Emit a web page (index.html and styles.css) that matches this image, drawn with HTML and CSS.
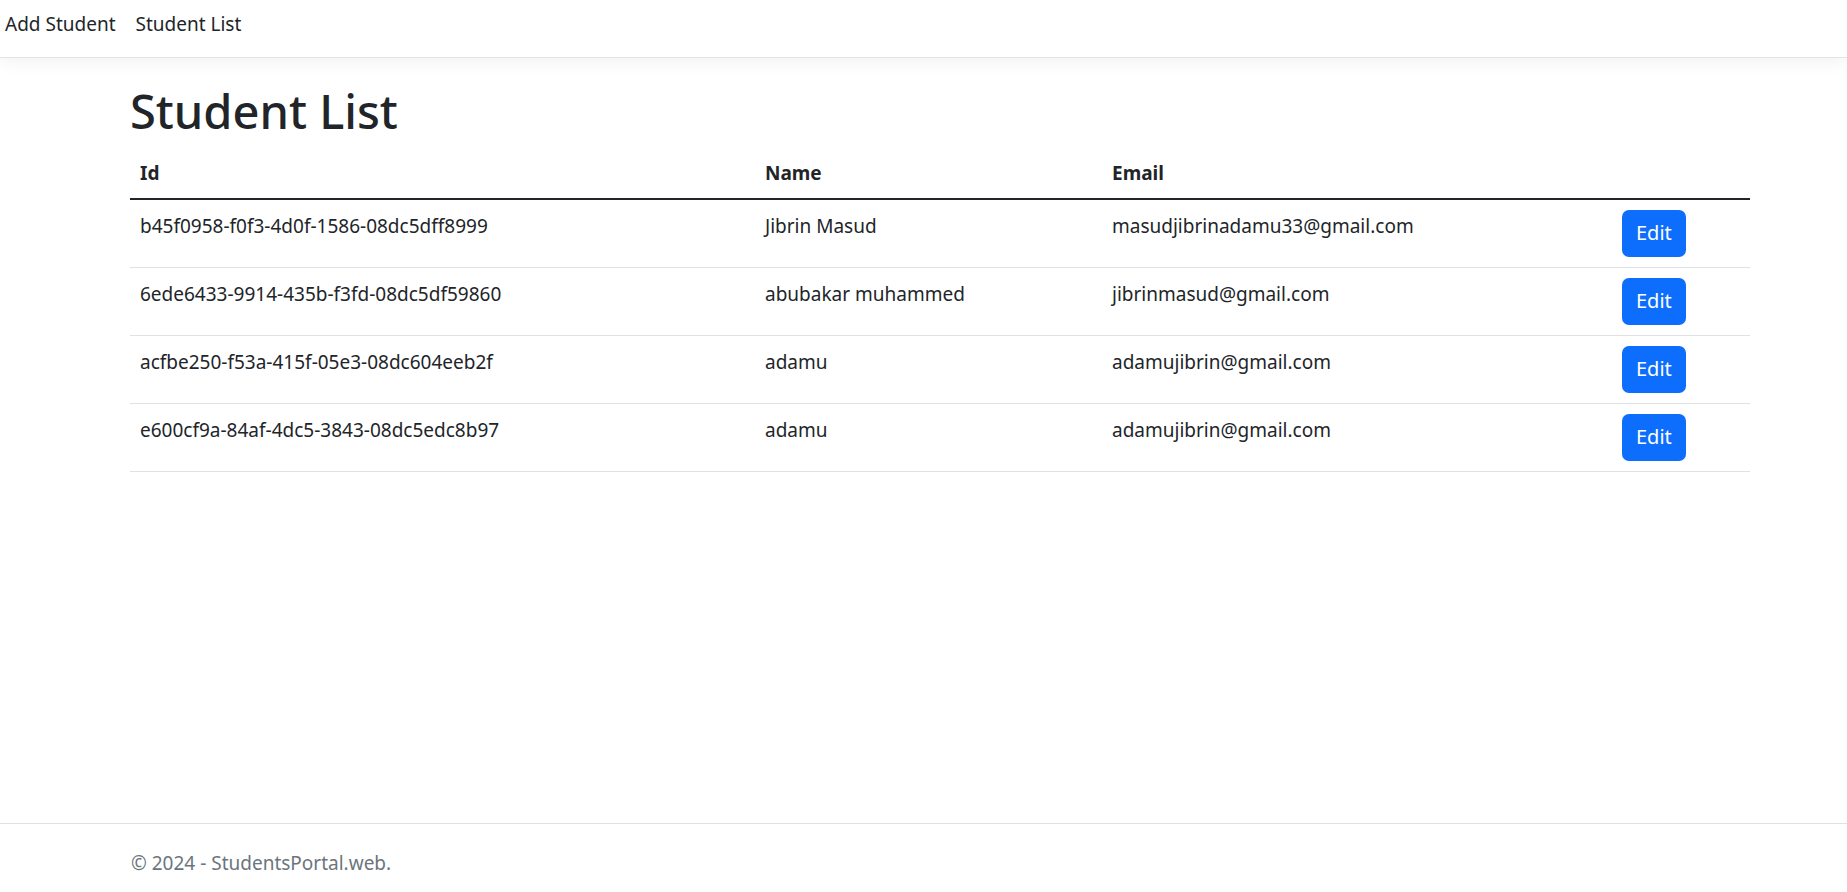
FILE: index.html
```html
<!DOCTYPE html>
<html lang="en">
<head>
<meta charset="utf-8">
<title>Student List</title>
<link rel="stylesheet" href="styles.css">
</head>
<body>
<header class="navbar">
  <nav class="nav-links">
    <a class="nav-link" href="#">Add Student</a>
    <a class="nav-link" href="#">Student List</a>
  </nav>
</header>
<main class="container">
  <h1 class="title">Student List</h1>
  <table class="table">
    <thead>
      <tr>
        <th class="col-id">Id</th>
        <th class="col-name">Name</th>
        <th class="col-email">Email</th>
        <th class="col-action"></th>
      </tr>
    </thead>
    <tbody>
      <tr>
        <td>b45f0958-f0f3-4d0f-1586-08dc5dff8999</td>
        <td>Jibrin Masud</td>
        <td>masudjibrinadamu33@gmail.com</td>
        <td><a class="btn" href="#">Edit</a></td>
      </tr>
      <tr>
        <td>6ede6433-9914-435b-f3fd-08dc5df59860</td>
        <td>abubakar muhammed</td>
        <td>jibrinmasud@gmail.com</td>
        <td><a class="btn" href="#">Edit</a></td>
      </tr>
      <tr>
        <td>acfbe250-f53a-415f-05e3-08dc604eeb2f</td>
        <td>adamu</td>
        <td>adamujibrin@gmail.com</td>
        <td><a class="btn" href="#">Edit</a></td>
      </tr>
      <tr>
        <td>e600cf9a-84af-4dc5-3843-08dc5edc8b97</td>
        <td>adamu</td>
        <td>adamujibrin@gmail.com</td>
        <td><a class="btn" href="#">Edit</a></td>
      </tr>
    </tbody>
  </table>
</main>
<footer class="footer">
  <div class="container footer-inner">&copy; 2024 - StudentsPortal.web.</div>
</footer>
</body>
</html>
```

FILE: styles.css
```css
* { box-sizing: border-box; }
html, body { margin: 0; padding: 0; }
body {
  font-family: "Noto Sans", "Open Sans", sans-serif;
  font-size: 19px;
  line-height: 30px;
  color: #212529;
  background: #fff;
  height: 892px;
  display: flex;
  flex-direction: column;
  overflow: hidden;
}
.navbar {
  height: 58px;
  border-bottom: 1px solid #e3e3e8;
  box-shadow: 0 5px 15px rgba(0, 0, 0, 0.05);
  padding: 9px 0 0 5px;
  background: #fff;
  position: relative;
  z-index: 1;
}
.nav-links { display: flex; gap: 20px; }
.nav-link { color: #212529; text-decoration: none; }
.container {
  margin-left: 130px;
  width: 1620px;
}
main.container { flex: 1; padding-top: 22px; }
.title {
  font-size: 47px;
  font-weight: 500;
  line-height: 58px;
  margin: 0 0 10px 0;
  position: relative;
  top: 2px;
}
.table {
  width: 1620px;
  border-collapse: collapse;
  table-layout: fixed;
}
.table th, .table td {
  text-align: left;
  vertical-align: top;
  padding: 10px;
  line-height: 30px;
}
.table td { padding-top: 11px; padding-bottom: 9px; }
.table th { font-weight: 700; border-bottom: 2px solid #212529; }
.table td { border-bottom: 1px solid #dee2e6; }
.table td.cell-action { padding-top: 10px; padding-bottom: 10px; }
.col-id { width: 625px; }
.col-name { width: 347px; }
.col-email { width: 510px; }
.col-action { width: 138px; }
.btn {
  display: inline-block;
  background: #0d6efd;
  color: #fff;
  text-decoration: none;
  padding: 8px 14px 9px;
  border-radius: 7px;
  line-height: 30px;
  font-size: 20px;
  position: relative;
  top: -1px;
}
.footer {
  height: 69px;
  border-top: 1px solid #dee2e6;
  color: #6c757d;
}
.footer-inner { padding-top: 24px; line-height: 30px; padding-left: 1px; }
```
